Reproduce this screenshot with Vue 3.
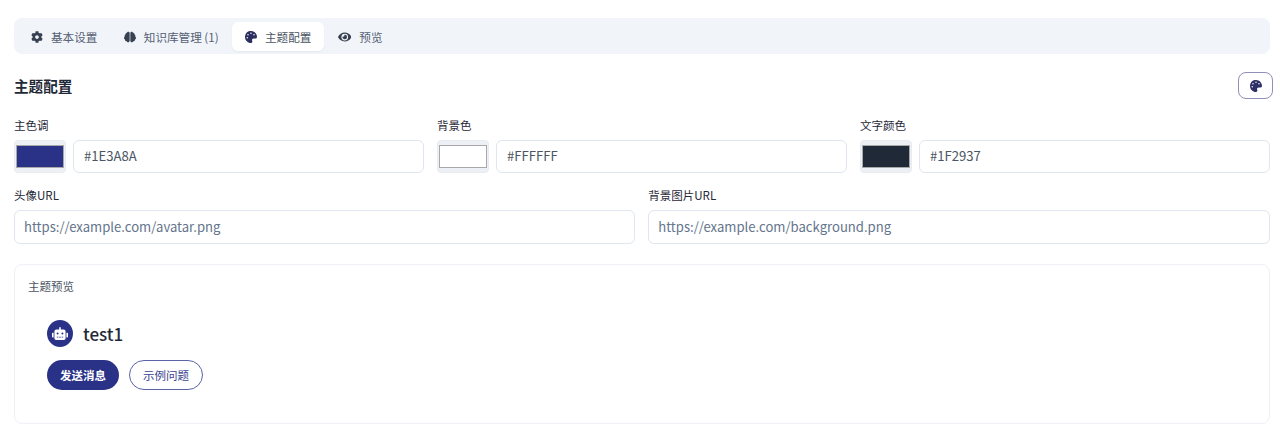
<script setup>
const tabs = [
  { label: '基本设置', vb: '0 0 512 512', d: 'M487.4 315.7l-42.6-24.6c4.3-23.2 4.3-47 0-70.2l42.6-24.6c4.9-2.8 7.1-8.6 5.5-14-11.1-35.6-30-67.8-54.7-94.6-3.8-4.1-10-5.1-14.8-2.3L380.8 110c-17.9-15.4-38.5-27.3-60.8-35.1V25.8c0-5.6-3.9-10.5-9.4-11.7-36.7-8.2-74.3-7.8-109.2 0-5.5 1.2-9.4 6.1-9.4 11.7V75c-22.2 7.9-42.8 19.8-60.8 35.1L88.7 85.5c-4.9-2.8-11-1.9-14.8 2.3-24.7 26.7-43.6 58.9-54.7 94.6-1.7 5.4.6 11.2 5.5 14L67.3 221c-4.3 23.2-4.3 47 0 70.2l-42.6 24.6c-4.9 2.8-7.1 8.6-5.5 14 11.1 35.6 30 67.8 54.7 94.6 3.8 4.1 10 5.1 14.8 2.3l42.6-24.6c17.9 15.4 38.5 27.3 60.8 35.1v49.2c0 5.6 3.9 10.5 9.4 11.7 36.7 8.2 74.3 7.8 109.2 0 5.5-1.2 9.4-6.1 9.4-11.7v-49.2c22.2-7.9 42.8-19.8 60.8-35.1l42.6 24.6c4.9 2.8 11 1.9 14.8-2.3 24.7-26.7 43.6-58.9 54.7-94.6 1.5-5.5-.7-11.3-5.6-14.1zM256 336c-44.1 0-80-35.9-80-80s35.9-80 80-80 80 35.9 80 80-35.9 80-80 80z' },
  { label: '知识库管理 (1)', vb: '0 0 576 512', d: 'M208 0c-29.9 0-54.7 20.5-61.8 48.2-.8 0-1.4-.2-2.2-.2-35.3 0-64 28.7-64 64 0 4.8.6 9.5 1.7 14C52.5 138 32 166.6 32 200c0 12.6 3.2 24.3 8.3 34.9C16.3 248.7 0 274.3 0 304c0 33.3 20.4 61.9 49.4 73.9-.9 4.6-1.4 9.3-1.4 14.1 0 39.8 32.2 72 72 72 4.1 0 8.1-.5 12-1.2 9.6 28.5 36.2 49.2 68 49.2 39.8 0 72-32.2 72-72V64c0-35.3-28.7-64-64-64zm368 304c0-29.7-16.3-55.3-40.3-69.1 5.2-10.6 8.3-22.3 8.3-34.9 0-33.4-20.5-62-49.7-74 1-4.5 1.7-9.2 1.7-14 0-35.3-28.7-64-64-64-.8 0-1.5.2-2.2.2C422.7 20.5 397.9 0 368 0c-35.3 0-64 28.6-64 64v376c0 39.8 32.2 72 72 72 31.8 0 58.4-20.7 68-49.2 3.9.7 7.9 1.2 12 1.2 39.8 0 72-32.2 72-72 0-4.8-.5-9.5-1.4-14.1 29-12 49.4-40.6 49.4-73.9z' },
  { label: '主题配置', active: true, vb: '0 0 512 512', d: 'M204.3 5C104.9 24.4 24.8 104.3 5.2 203.4c-37 187 131.7 326.4 258.8 306.7 41.2-6.4 61.4-54.6 42.5-91.7-23.1-45.4 9.9-98.4 60.9-98.4h79.7c35.8 0 64.8-29.6 64.9-65.3C511.5 97.1 368.1-26.9 204.3 5zM96 320c-17.7 0-32-14.3-32-32s14.3-32 32-32 32 14.3 32 32-14.3 32-32 32zm32-128c-17.7 0-32-14.3-32-32s14.3-32 32-32 32 14.3 32 32-14.3 32-32 32zm128-64c-17.7 0-32-14.3-32-32s14.3-32 32-32 32 14.3 32 32-14.3 32-32 32zm128 64c-17.7 0-32-14.3-32-32s14.3-32 32-32 32 14.3 32 32-14.3 32-32 32z' },
  { label: '预览', wide: true, vb: '0 0 576 512', d: 'M572.52 241.4C518.29 135.59 410.93 64 288 64S57.68 135.64 3.48 241.41a32.35 32.35 0 0 0 0 29.19C57.71 376.41 165.07 448 288 448s230.32-71.64 284.52-177.41a32.35 32.35 0 0 0 0-29.19zM288 400a144 144 0 1 1 144-144 143.93 143.93 0 0 1-144 144zm0-240a95.31 95.31 0 0 0-25.31 3.79 47.85 47.85 0 0 1-66.9 66.9A95.78 95.78 0 1 0 288 160z' }
]
const palette = tabs[2]
const colors = [
  { label: '主色调', value: '#2a3287', text: '#1E3A8A' },
  { label: '背景色', value: '#ffffff', text: '#FFFFFF' },
  { label: '文字颜色', value: '#1f2937', text: '#1F2937' }
]
const urls = [
  { label: '头像URL', ph: 'https://example.com/avatar.png' },
  { label: '背景图片URL', ph: 'https://example.com/background.png' }
]
</script>

<template>
  <div class="page">
    <nav class="tabs">
      <button v-for="t in tabs" :key="t.label" class="tab" :class="{ active: t.active }">
        <svg class="tab-icon" :class="{ wide: t.wide }" :viewBox="t.vb" fill="currentColor"><path :d="t.d" /></svg>
        <span>{{ t.label }}</span>
      </button>
    </nav>

    <header class="head">
      <h2>主题配置</h2>
      <button class="icon-btn" aria-label="主题">
        <svg :viewBox="palette.vb" fill="currentColor"><path :d="palette.d" /></svg>
      </button>
    </header>

    <section class="row three">
      <div v-for="c in colors" :key="c.label" class="field">
        <label>{{ c.label }}</label>
        <div class="color-line">
          <input class="swatch" type="color" :value="c.value" />
          <input class="text grow" type="text" :value="c.text" />
        </div>
      </div>
    </section>

    <section class="row two">
      <div v-for="u in urls" :key="u.label" class="field">
        <label>{{ u.label }}</label>
        <input class="text" type="text" :placeholder="u.ph" />
      </div>
    </section>

    <section class="card">
      <div class="card-title">主题预览</div>
      <div class="preview">
        <div class="bot">
          <span class="avatar">
            <svg viewBox="0 0 640 512" fill="currentColor"><path d="M32,224H64V416H32A31.96166,31.96166,0,0,1,0,384V256A31.96166,31.96166,0,0,1,32,224Zm512-48V448a64.06328,64.06328,0,0,1-64,64H160a64.06328,64.06328,0,0,1-64-64V176a79.974,79.974,0,0,1,80-80H288V32a32,32,0,0,1,64,0V96H464A79.974,79.974,0,0,1,544,176ZM264,256a40,40,0,1,0-40,40A39.997,39.997,0,0,0,264,256Zm-8,128H192v32h64Zm96,0H288v32h64ZM456,256a40,40,0,1,0-40,40A39.997,39.997,0,0,0,456,256Zm-8,128H384v32h64ZM640,256V384a31.96166,31.96166,0,0,1-32,32H576V224h32A31.96166,31.96166,0,0,1,640,256Z" /></svg>
          </span>
          <span class="bot-name">test1</span>
        </div>
        <div class="actions">
          <button class="pill solid">发送消息</button>
          <button class="pill outline">示例问题</button>
        </div>
      </div>
    </section>
  </div>
</template>

<style>
html, body { margin: 0; background: #fff; }
</style>

<style scoped>
.page {
  box-sizing: border-box;
  width: 1280px;
  height: 440px;
  padding: 18px 10px 0 14px;
  overflow: hidden;
  font-family: "Noto Sans CJK SC", "Noto Sans", sans-serif;
  color: #1f2937;
}
.tabs {
  display: flex;
  gap: .4px;
  height: 36px;
  box-sizing: border-box;
  padding: 4px 4px 3px;
  background: #f1f5f9;
  border-radius: 8px;
}
.tab {
  display: flex;
  align-items: center;
  gap: 8px;
  padding: 0 13px;
  border: 0;
  border-radius: 6px;
  background: transparent;
  font: 400 11.6px "Noto Sans CJK SC", "Noto Sans", sans-serif;
  color: #566074;
}
.tab.active {
  background: #fff;
  color: #4b5563;
  box-shadow: 0 1px 2px rgba(15, 23, 42, .05);
}
.tab-icon { width: 12px; height: 12px; color: #374151; }
.tab-icon.wide { width: 13.5px; }
.tab.active .tab-icon { color: #2a2f5f; }

.head {
  display: flex;
  justify-content: space-between;
  align-items: center;
  margin-top: 18px;
  height: 27px;
}
.head h2 {
  margin: 0;
  font-size: 14.6px;
  font-weight: 600;
  line-height: 27px;
  color: #1f2937;
}
.icon-btn {
  box-sizing: border-box;
  width: 35px;
  height: 27px;
  margin-right: -3px;
  padding: 0;
  display: flex;
  align-items: center;
  justify-content: center;
  background: #fff;
  border: 1px solid #8f8fb8;
  border-radius: 8px;
  color: #2e2f66;
}
.icon-btn svg { width: 12px; height: 12px; }

.row { display: grid; gap: 13px; }
.three { grid-template-columns: repeat(3, 1fr); margin-top: 18px; }
.two { grid-template-columns: repeat(2, 1fr); margin-top: 14px; padding-right: .5px; }
.field { min-width: 0; display: flex; flex-direction: column; }
.field label {
  font-size: 11.52px;
  line-height: 16px;
  margin-bottom: 7px;
  color: #1f2937;
}
.color-line { display: flex; gap: 7px; }
.swatch {
  box-sizing: border-box;
  flex: none;
  width: 52px;
  height: 33px;
  padding: 4px 1px;
  background: #edf0f4;
  border: 1px solid #e8ecf1;
  border-radius: 4px;
}
.swatch::-webkit-color-swatch-wrapper { padding: 0; }
.swatch::-webkit-color-swatch { border: 1px solid #a8a8a8; border-radius: 0; }
.text {
  box-sizing: border-box;
  width: 100%;
  min-width: 0;
  height: 34px;
  padding: 0 9px 2px;
  background: #fff;
  border: 1px solid #dfe6ef;
  border-radius: 6px;
  font: 400 13.1px "Noto Sans CJK SC", "Noto Sans", sans-serif;
  color: #4b5563;
  outline: 0;
}
.text.grow { flex: 1; height: 33px; padding: 0 10px 2px; }
.text::placeholder { color: #64748b; opacity: 1; }

.card {
  box-sizing: border-box;
  height: 160px;
  margin-top: 20px;
  padding: 13px 13px;
  background: #fff;
  border: 1px solid #eef2f6;
  border-radius: 8px;
}
.card-title {
  font-size: 11.52px;
  line-height: 16px;
  color: #4b5563;
}
.preview { padding: 26px 19px 0; }
.bot { display: flex; align-items: center; gap: 10px; }
.avatar {
  width: 26px;
  height: 27px;
  border-radius: 50%;
  background: #2a3287;
  color: #fff;
  display: flex;
  align-items: center;
  justify-content: center;
}
.avatar svg { width: 16px; height: 13px; }
.bot-name { font-size: 17px; font-weight: 500; line-height: 27px; color: #1f2937; }
.actions { display: flex; gap: 10px; margin-top: 13px; }
.pill {
  box-sizing: border-box;
  height: 30px;
  padding: 0;
  border-radius: 16px;
  font: 400 11.52px "Noto Sans CJK SC", "Noto Sans", sans-serif;
}
.pill.solid { width: 72px; background: #2a3287; border: 0; color: #fff; font-weight: 600; }
.pill.outline { width: 74px; background: #fff; border: 1px solid #5a62a8; color: #3b4390; }
</style>
